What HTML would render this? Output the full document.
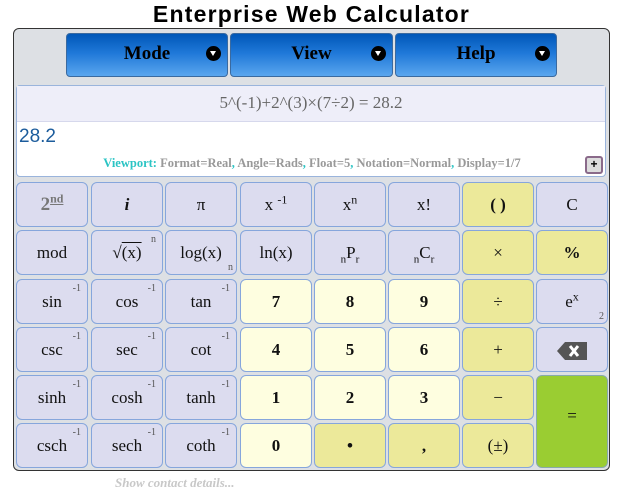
<!DOCTYPE html>
<html><head><style>
body{margin:0;width:623px;height:496px;background:#fff;position:relative;font-family:"Liberation Serif",serif;overflow:hidden}
h1{position:absolute;top:0;left:0;width:623px;margin:0;text-align:center;font:bold 23px "Liberation Sans",sans-serif;line-height:28px;color:#000;letter-spacing:1.2px}
#box{position:absolute;left:13px;top:28px;width:595px;height:441px;background:#dde0e4;border:1px solid #333;border-radius:6px}
.menu{position:absolute;top:33px;height:44px;border:1px solid #3a6aa0;border-radius:4px;background:linear-gradient(#0057b8,#1f78d8 45%,#5aa6ee);font:bold 19px "Liberation Serif",serif;line-height:40px;color:#000;text-align:center;box-sizing:border-box}
.menu i{position:absolute;right:6px;top:12px;width:15px;height:15px;border-radius:50%;background:#000}
.menu i:after{content:"";position:absolute;left:4px;top:5px;border-left:3.5px solid transparent;border-right:3.5px solid transparent;border-top:5px solid #fff}
#disp{position:absolute;left:16px;top:85px;width:590px;height:92px;background:#fff;border:1px solid #9ab4dc;border-radius:4px;box-sizing:border-box}
#f{height:35px;background:#eeeef9;border-bottom:1px solid #d6d8ec;text-align:center;font:17px "Liberation Serif",serif;line-height:33px;color:#666}
#r{position:absolute;left:2px;top:40px;font:19px "Liberation Sans",sans-serif;color:#1c5c9c}
#vp{position:absolute;left:0;width:590px;top:70px;text-align:center;font:bold 12.5px "Liberation Serif",serif;color:#999}
#vp b{color:#2bc4c4}
#plus{position:absolute;left:568px;top:70px;width:14px;height:14px;border:2px solid #8a6a8a;border-radius:3px;background:#ddd;font:bold 12px sans-serif;line-height:13px;text-align:center}
.k{position:absolute;width:72px;height:45px;box-sizing:border-box;border:1px solid #86a6dc;border-radius:6px;background:#dcdcef;text-align:center;font:17px "Liberation Serif",serif;line-height:43px;color:#111}
.n{background:#fefee0;font-weight:bold}
.o{background:#ece99a}
.s{position:absolute;right:6px;top:4px;font-size:10px;line-height:10px;color:#555}
.b{font-weight:bold}
sup{font-size:12px;line-height:0}
sub{line-height:0}
#c{position:absolute;left:115px;top:475px;font:italic bold 13px "Liberation Serif",serif;color:#c8c8c8}
</style></head><body>
<h1>Enterprise Web Calculator</h1>
<div id="box"></div>
<div class="menu" style="left:66px;width:162px">Mode<i></i></div>
<div class="menu" style="left:230px;width:163px">View<i></i></div>
<div class="menu" style="left:395px;width:162px">Help<i></i></div>
<div id="disp"><div id="f">5^(-1)+2^(3)×(7÷2) = 28.2</div><div id="r">28.2</div>
<div id="vp"><b>Viewport:</b> Format=Real<b>,</b> Angle=Rads<b>,</b> Float=5<b>,</b> Notation=Normal<b>,</b> Display=1/7</div><div id="plus">+</div></div>

<div class="k b" style="left:16px;top:182px;color:#777;font-size:19px">2<sup><u>nd</u></sup></div>
<div class="k b" style="left:91px;top:182px"><i>i</i></div>
<div class="k" style="left:165px;top:182px">π</div>
<div class="k" style="left:240px;top:182px">x <sup>-1</sup></div>
<div class="k" style="left:314px;top:182px">x<sup>n</sup></div>
<div class="k" style="left:388px;top:182px">x!</div>
<div class="k o b" style="left:462px;top:182px">( )</div>
<div class="k" style="left:536px;top:182px">C</div>

<div class="k" style="left:16px;top:230px">mod</div>
<div class="k" style="left:91px;top:230px">√<span style="text-decoration:overline">(x)</span><span class="s">n</span></div>
<div class="k" style="left:165px;top:230px">log(x)<span class="s" style="top:32px;right:3px">n</span></div>
<div class="k" style="left:240px;top:230px">ln(x)</div>
<div class="k" style="left:314px;top:230px"><sub style="font-size:11px">n</sub>P<sub style="font-size:11px">r</sub></div>
<div class="k" style="left:388px;top:230px"><sub style="font-size:11px">n</sub>C<sub style="font-size:11px">r</sub></div>
<div class="k o" style="left:462px;top:230px">×</div>
<div class="k o b" style="left:536px;top:230px">%</div>

<div class="k" style="left:16px;top:279px">sin<span class="s">-1</span></div>
<div class="k" style="left:91px;top:279px">cos<span class="s">-1</span></div>
<div class="k" style="left:165px;top:279px">tan<span class="s">-1</span></div>
<div class="k n" style="left:240px;top:279px">7</div>
<div class="k n" style="left:314px;top:279px">8</div>
<div class="k n" style="left:388px;top:279px">9</div>
<div class="k o" style="left:462px;top:279px">÷</div>
<div class="k" style="left:536px;top:279px">e<sup>x</sup><span class="s" style="top:32px;right:3px">2</span></div>

<div class="k" style="left:16px;top:327px">csc<span class="s">-1</span></div>
<div class="k" style="left:91px;top:327px">sec<span class="s">-1</span></div>
<div class="k" style="left:165px;top:327px">cot<span class="s">-1</span></div>
<div class="k n" style="left:240px;top:327px">4</div>
<div class="k n" style="left:314px;top:327px">5</div>
<div class="k n" style="left:388px;top:327px">6</div>
<div class="k o" style="left:462px;top:327px">+</div>
<div class="k" style="left:536px;top:327px"><svg width="30" height="18" viewBox="0 0 30 18" style="vertical-align:middle"><path d="M0 9L8 0H30V18H8Z" fill="#555"/><path d="M13 4L21 14M21 4L13 14" stroke="#fff" stroke-width="3"/></svg></div>

<div class="k" style="left:16px;top:375px">sinh<span class="s">-1</span></div>
<div class="k" style="left:91px;top:375px">cosh<span class="s">-1</span></div>
<div class="k" style="left:165px;top:375px">tanh<span class="s">-1</span></div>
<div class="k n" style="left:240px;top:375px">1</div>
<div class="k n" style="left:314px;top:375px">2</div>
<div class="k n" style="left:388px;top:375px">3</div>
<div class="k o" style="left:462px;top:375px">−</div>
<div class="k" style="left:536px;top:375px;height:93px;line-height:80px;background:#9acd32;border-color:#8aa;">=</div>

<div class="k" style="left:16px;top:423px">csch<span class="s">-1</span></div>
<div class="k" style="left:91px;top:423px">sech<span class="s">-1</span></div>
<div class="k" style="left:165px;top:423px">coth<span class="s">-1</span></div>
<div class="k n" style="left:240px;top:423px">0</div>
<div class="k o b" style="left:314px;top:423px">•</div>
<div class="k o b" style="left:388px;top:423px">,</div>
<div class="k o" style="left:462px;top:423px">(±)</div>
<div id="c">Show contact details...</div>
</body></html>
